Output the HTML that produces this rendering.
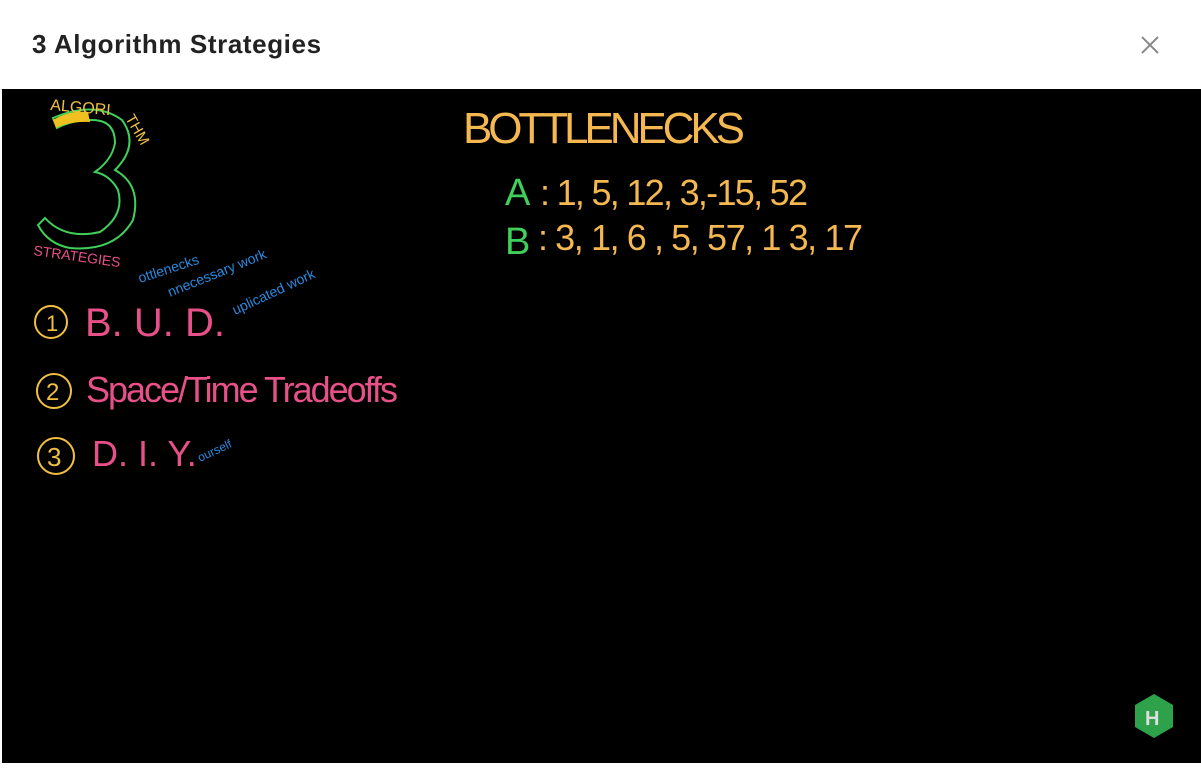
<!DOCTYPE html>
<html><head><style>
html,body{margin:0;padding:0;width:1201px;height:763px;overflow:hidden;background:#fff;font-family:"Liberation Sans",sans-serif}
.hdr{position:absolute;left:0;top:0;width:1201px;height:89px;background:#fff;border-bottom:1px solid #e5e5e5}
.hdr h1{position:absolute;left:32px;top:29px;margin:0;font-size:26px;font-weight:bold;color:#222;letter-spacing:0.6px}
.x{position:absolute;left:1140px;top:35px;width:20px;height:20px}
.board{position:absolute;left:2px;top:89px;width:1199px;height:674px;background:#000}
svg text{font-family:"Liberation Sans",sans-serif}
</style></head><body>
<div class="hdr"><h1>3 Algorithm Strategies</h1>
<svg class="x" viewBox="0 0 20 20"><path d="M2 2L18 18M18 2L2 18" stroke="#888" stroke-width="2"/></svg></div>
<div class="board">
<svg width="1199" height="674" viewBox="2 89 1199 674">
<path d="M53 118 Q95 100 122 120 Q140 145 115 170 Q142 185 133 220 Q115 252 70 248 Q48 244 38 225 L45 218 Q65 240 100 232 Q125 215 118 190 Q110 175 95 172 Q112 160 115 143 Q115 120 92 120 Q72 120 57 128Z" fill="none" stroke="#3fcf5a" stroke-width="2"/>
<path d="M53 120 Q70 110 88 112 L90 122 Q70 121 56 128Z" fill="#f0c020"/>
<text x="50" y="110" fill="#f0c040" font-size="16" transform="rotate(5 50 110)">ALGORI</text>
<text x="125" y="118" fill="#f0c040" font-size="15" transform="rotate(60 125 118)">THM</text>
<text x="33" y="255" fill="#e8508a" font-size="14" transform="rotate(8 33 255)">STRATEGIES</text>
<text x="140" y="283" fill="#2a8ae0" font-size="14" transform="rotate(-18 140 283)">ottlenecks</text>
<text x="170" y="297" fill="#2a8ae0" font-size="14" transform="rotate(-22 170 297)">nnecessary work</text>
<text x="235" y="315" fill="#2a8ae0" font-size="14" transform="rotate(-25 235 315)">uplicated work</text>
<text x="200" y="462" fill="#2a8ae0" font-size="12" transform="rotate(-25 200 462)">ourself</text>
<circle cx="51" cy="322" r="16" fill="none" stroke="#f0c040" stroke-width="2"/>
<circle cx="54" cy="391" r="17" fill="none" stroke="#f0c040" stroke-width="2"/>
<circle cx="56" cy="456" r="18" fill="none" stroke="#f0c040" stroke-width="2"/>
<text x="46" y="331" fill="#f0c040" font-size="22">1</text>
<text x="46" y="400" fill="#f0c040" font-size="24">2</text>
<text x="47" y="466" fill="#f0c040" font-size="26">3</text>
<text x="85" y="336" fill="#e8508a" font-size="40">B. U. D.</text>
<text x="86" y="402" fill="#e8508a" font-size="36" textLength="312">Space/Time Tradeoffs</text>
<text x="92" y="466" fill="#e8508a" font-size="36">D. I. Y.</text>
<text x="463" y="143" fill="#f5b850" font-size="44" textLength="282">BOTTLENECKS</text>
<text x="505" y="205" fill="#3fcf5a" font-size="38">A</text>
<text x="540" y="205" fill="#f5b850" font-size="36" textLength="268">: 1, 5, 12, 3,-15, 52</text>
<text x="505" y="254" fill="#3fcf5a" font-size="38">B</text>
<text x="538" y="250" fill="#f5b850" font-size="36" textLength="325">: 3, 1, 6 , 5, 57, 1 3, 17</text>
<path d="M1154 694 L1173 705 L1173 727 L1154 738 L1135 727 L1135 705Z" fill="#2ea24a"/>
<text x="1145" y="725" fill="#ddd" font-size="20" font-weight="bold">H</text>
</svg></div>
</body></html>
